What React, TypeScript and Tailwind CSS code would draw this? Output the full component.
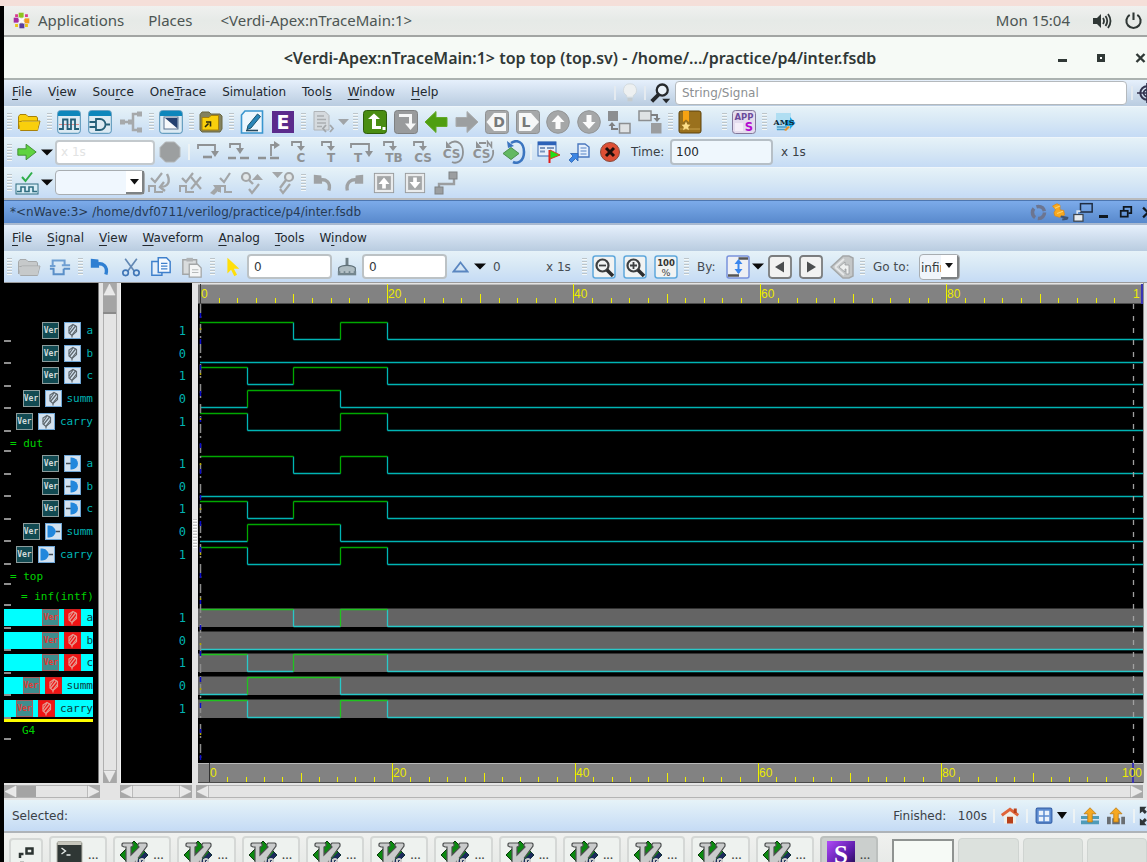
import React from "react";

type Kids = { children?: React.ReactNode };

const UI = "font-['DejaVu_Sans',sans-serif]";

/* ---------- small building blocks ---------- */

function Icon({ children, size = 24 }: Kids & { size?: number }) {
  return (
    <svg width={size} height={size} viewBox="0 0 24 24" fill="none" aria-hidden="true" className="shrink-0">
      {children}
    </svg>
  );
}

function Tool({ label, children, className = "w-[30px]" }: Kids & { label: string; className?: string }) {
  return (
    <button type="button" aria-label={label} className={`flex h-full shrink-0 items-center justify-center ${className}`}>
      {children}
    </button>
  );
}

function ToolRun({ items, className }: { items: [string, React.ReactNode][]; className: string }) {
  return (
    <div className={`flex h-full shrink-0 ${className}`}>
      {items.map(([label, icon]) => (
        <Tool key={label} label={label} className="flex-1">
          {icon}
        </Tool>
      ))}
    </div>
  );
}

function Grip() {
  return (
    <div className="flex w-[10px] shrink-0 flex-col items-center gap-px self-center">
      {[0, 1, 2, 3, 4, 5].map((i) => (
        <span key={i} className="h-[2px] w-[5px] border-b border-[#f4f8f8] bg-[#bcc5ca]" />
      ))}
    </div>
  );
}

function Bar({ children, className = "h-[30px]" }: Kids & { className?: string }) {
  return (
    <div
      className={`flex shrink-0 items-center overflow-hidden bg-linear-to-b from-[#e6f2f8] via-[#d6e7f5] to-[#c5dbf5] ${className}`}
    >
      {children}
    </div>
  );
}

function Caret() {
  return (
    <svg width="12" height="7" viewBox="0 0 12 7" aria-hidden="true">
      <path d="M0 0.5h12L6 6.5z" fill="#0a0a0a" />
    </svg>
  );
}

function Menu({ items }: { items: [string, string, string][] }) {
  return (
    <>
      {items.map(([a, key, b]) => (
        <button key={a + key + b} type="button" className="shrink-0 whitespace-nowrap">
          {a}
          <span className="underline decoration-1 underline-offset-[3px]">{key}</span>
          {b}
        </button>
      ))}
    </>
  );
}

/* ---------- toolbar glyphs ---------- */

const G = "#8f9294";

const Folder = ({ fill = "#f9cf0c", edge = "#a98208", top = "#ffe75a" }) => (
  <Icon>
    <path d="M1.5 19V6.5l1.5-2h6l2 2h8.500l1 1.500V11" fill={fill} stroke={edge} />
    <path d="M3.500 20.500h17l2.500-9.500H5.500L1.500 12z" fill={top} stroke={edge} />
    <path d="M2 12h20l-1.500 8H3z" fill={fill} />
  </Icon>
);

const Framed = ({ children }: Kids) => (
  <Icon>
    <rect x="0.700" y="0.700" width="22.600" height="22.600" rx="2.500" fill="#dceaf3" stroke="#4e8fb5" />
    <path d="M1 6V2.500L2.500 1h19L23 2.500V6z" fill="#0d86bb" />
    {children}
  </Icon>
);

const WaveIcon = () => (
  <Framed>
    <path d="M2 14.500h20" stroke="#e08a86" />
    <path d="M2 19h4V9.500h4.500V19H14V9.500h4V19h4" stroke="#255f78" strokeWidth="1.800" />
  </Framed>
);

const GateIcon = () => (
  <Framed>
    <path d="M8 9h4a5.500 5.500 0 0 1 0 11H8zM1.500 12H8M1.500 17H8M17.500 14.500H22" stroke="#255f78" strokeWidth="1.800" />
  </Framed>
);

const TreeIcon = () => (
  <Icon>
    <path d="M6 12h8M19 4h-5v16h5" stroke="#a6a9ab" strokeWidth="2.500" />
    <path d="M1 9.500h5v5H1zM9 9.500h4.500v5H9zM18 1.500h5v5h-5zM18 17.500h5v5h-5z" fill="#a6a9ab" />
  </Icon>
);

const SchematicIcon = () => (
  <Framed>
    <rect x="5" y="7" width="14" height="12" fill="#f7f9fb" stroke="#5a7390" />
    <path d="M6 8h12.500v10.500z" fill="#24406f" />
  </Framed>
);

const FolderLink = () => (
  <Icon>
    <path d="M1 20V4.500L3 2h7l2 2h9l2 2v13l-2 3H3z" fill="#83815d" stroke="#6a6740" />
    <path d="M3 7.500h7l2-2h7.500V20H3z" fill="#f9cf0c" stroke="#a98208" />
    <path d="M6 17l3.500-3.500M7 12h4.500v4.500" stroke="#2b2a10" strokeWidth="1.600" />
  </Icon>
);

const PencilIcon = () => (
  <Icon>
    <path d="M5 1h17.500v22H1.500V5z" fill="#eef7fd" stroke="#3a96cf" strokeWidth="1.600" />
    <path d="M8 15.500L17.500 4l3 2.500L11 18l-4 1.500z" fill="#2a86b8" stroke="#17546f" />
    <path d="M6 20.500h12" stroke="#27495c" strokeWidth="1.600" />
  </Icon>
);

const BigLetter = ({ bg, ch, fg = "#fff" }: { bg: string; ch: string; fg?: string }) => (
  <Icon>
    <rect x="1" y="1" width="22" height="22" fill={bg} />
    <text x="12" y="19" textAnchor="middle" fontSize="19" fontWeight="700" fontFamily="DejaVu Sans" fill={fg}>
      {ch}
    </text>
  </Icon>
);

const ScriptIcon = () => (
  <Icon>
    <path d="M3 1.500h11l4 4V20H3z" fill="#d5dade" stroke="#b0b4b7" />
    <path d="M6 6h7M6 9.500h9M6 13h9M6 16.500h5" stroke="#aaaeb1" strokeWidth="1.500" />
    <path d="M15 15l-3 3.500 3 3.500M19 15l3 3.500-3 3.500" stroke="#a3a7aa" strokeWidth="1.800" />
  </Icon>
);

const Tile = ({ bg, edge, children }: Kids & { bg: string; edge: string }) => (
  <Icon>
    <rect x="0.500" y="0.500" width="23" height="23" rx="3" fill={bg} stroke={edge} />
    {children}
  </Icon>
);

const GreenL = () => (
  <Tile bg="#4a8d12" edge="#2e5d0b">
    <path d="M9 19V9H5l6-5.500L17 9h-4v7h5v3z" fill="#fff" />
    <path d="M19.500 17h3v3h-3z" fill="#fff" />
  </Tile>
);

const GreyTurn = () => (
  <Tile bg="#999b9c" edge="#7e8081">
    <path d="M5 5.500h11.500v9" stroke="#f6f7f7" strokeWidth="3" />
    <path d="M11 13.500h11L16.500 20z" fill="#f6f7f7" />
  </Tile>
);

const BigArrow = ({ left = false, fill, edge }: { left?: boolean; fill: string; edge: string }) => (
  <Icon>
    <path
      d={left ? "M12 1.500v6h11v9H12v6L1 12z" : "M12 1.500v6H1v9h11v6L23 12z"}
      fill={fill}
      stroke={edge}
      strokeLinejoin="round"
    />
  </Icon>
);

const TagTile = ({ ch, flip = false }: { ch: string; flip?: boolean }) => (
  <Tile bg="#a6a8a9" edge="#8f9192">
    <path d={flip ? "M3 3h12l8 9-8 9H3z" : "M21 3H9L1.500 12 9 21h12z"} fill="#f6f7f7" />
    <text x={flip ? 10 : 14} y="17" textAnchor="middle" fontSize="14" fontWeight="700" fontFamily="DejaVu Sans" fill="#77797a">
      {ch}
    </text>
  </Tile>
);

const RoundArrow = ({ down = false }: { down?: boolean }) => (
  <Icon>
    <circle cx="12" cy="12" r="11.300" fill="#a5a7a8" stroke="#929495" />
    <path d={down ? "M9.500 5h5v7h4L12 19l-6.500-7h4z" : "M9.500 19h5v-7h4L12 5l-6.500 7h4z"} fill="#fbfbfb" />
  </Icon>
);

const HierUp = () => (
  <Icon>
    <rect x="1" y="1" width="10" height="10" fill="#8c8e90" />
    <path d="M5 13v6h6" stroke="#7e8082" strokeWidth="2" />
    <path d="M1.500 16L5 12l3.500 4z" fill="#7e8082" />
    <rect x="12.500" y="13.500" width="10.500" height="9.500" fill="#dfe2e4" stroke="#8c8e90" strokeWidth="1.500" />
  </Icon>
);

const HierDown = () => (
  <Icon>
    <rect x="1" y="1" width="12" height="9.500" fill="#dfe2e4" stroke="#8c8e90" strokeWidth="1.500" />
    <path d="M13 5h6v5" stroke="#7e8082" strokeWidth="2" />
    <path d="M15.500 8h7L19 12z" fill="#7e8082" />
    <rect x="13" y="13" width="10.500" height="10.500" fill="#9b9d9f" />
  </Icon>
);

const BookIcon = () => (
  <Icon>
    <rect x="1" y="1" width="22" height="22" rx="2" fill="#9a711d" stroke="#5d430d" />
    <path d="M2 19h20" stroke="#c7a14a" />
    <path d="M5 1h6v11l-3-2.500L5 12z" fill="#f7a312" />
    <path d="M8 11.500l1.400 3 3.100.300-2.300 2.200.700 3.200L8 18.500l-2.900 1.700.700-3.200-2.300-2.200 3.100-.300z" fill="#ffe08a" />
  </Icon>
);

const AppsIcon = () => (
  <Tile bg="#e4dcee" edge="#82789a">
    <rect x="3" y="13" width="8" height="8" fill="#f4eef8" />
    <text x="12" y="9.500" textAnchor="middle" fontSize="8.500" fontWeight="700" fontFamily="DejaVu Sans" fill="#6a4a9c">
      APP
    </text>
    <text x="17" y="20.500" textAnchor="middle" fontSize="11.500" fontWeight="700" fontFamily="DejaVu Sans" fill="#b40cd0">
      S
    </text>
  </Tile>
);

const AmsIcon = () => (
  <Icon>
    <rect x="4" y="3" width="15" height="17" fill="#b0def2" />
    <path d="M5 17h10M5 19.500h8" stroke="#4a9dcb" strokeWidth="1.500" />
    <path d="M13 10h5V7l5.500 6-5.500 6v-3h-5z" fill="#22a7e4" />
    <path d="M12 20l4-4 2 1-4 4z" fill="#e8922a" />
    <text x="12" y="15" textAnchor="middle" fontSize="8" fontWeight="700" fontFamily="DejaVu Serif" fill="#0d2533">
      AMS
    </text>
  </Icon>
);

const GreenGo = () => (
  <Icon size={22}>
    <path d="M2 8.500h9V3.500L22 12l-11 8.500v-5H2z" fill="#5fd340" stroke="#3c8a30" strokeLinejoin="round" />
  </Icon>
);

const Octagon = () => (
  <Icon>
    <path d="M7.500 2h9L22 7.500v9L16.500 22h-9L2 16.500v-9z" fill="#9c9fa0" stroke="#b4b7b8" />
  </Icon>
);

const StepIcon = ({ d, head, text, tx = 15, dash }: { d: string; head: string; text?: string; tx?: number; dash?: string }) => (
  <Icon>
    <path d={d} stroke={G} strokeWidth="1.800" />
    <path d={head} fill={G} />
    {dash && <path d={dash} stroke={G} strokeWidth="2.600" />}
    {text && (
      <text x={tx} y="21.500" textAnchor="middle" fontSize="12" fontWeight="700" fontFamily="DejaVu Sans" fill={G}>
        {text}
      </text>
    )}
  </Icon>
);

const HOOK = "M4 6V2h9v4";
const HOOK_HEAD = "M9 6h8l-4 5z";

const LoopCS = ({ n = false }: { n?: boolean }) => (
  <Icon>
    <path d={n ? "M8 3h7M22 10c1 7-3 13-10 12" : "M8 4c6-5 14-2 14 8s-7 12-11 10"} stroke={G} strokeWidth="1.800" />
    <path d="M5 1v7h6z" fill={G} />
    <text x="10.500" y="18" textAnchor="middle" fontSize="12" fontWeight="700" fontFamily="DejaVu Sans" fill={G}>
      CS
    </text>
    {n && <path d="M16.500 7V1.500L20.500 7V1.500" stroke={G} strokeWidth="1.500" />}
  </Icon>
);

const LoopGreen = () => (
  <Icon>
    <path d="M9 3c6-4 13-1 13 9s-7 12-11 10" stroke="#3b75c0" strokeWidth="2.600" />
    <path d="M5 1l1 7 6-2z" fill="#3b75c0" />
    <path d="M9 7.500l8 6-8 6-8-6z" fill="#62b862" stroke="#4b8f4d" />
  </Icon>
);

const FlagTable = () => (
  <Icon>
    <rect x="2" y="2" width="18" height="14" fill="#e6eefa" stroke="#3566b0" />
    <path d="M2 3.500h18" stroke="#2d62b8" strokeWidth="3.500" />
    <path d="M4 8h5M11 8h7M4 11.500h5" stroke="#7a95bd" strokeWidth="1.800" />
    <path d="M13.500 10v13" stroke="#e11a1a" strokeWidth="2" />
    <path d="M14 10l10 5-10 4z" fill="#1fe016" stroke="#d8401c" />
  </Icon>
);

const DocJump = () => (
  <Icon>
    <path d="M11 4h7l4 3v10H11z" fill="#e4effc" stroke="#4a78be" strokeWidth="1.400" />
    <path d="M13.500 8h6M13.500 11h6M13.500 14h6" stroke="#5583c6" strokeWidth="1.200" />
    <path d="M2 20l4-4-2.500-2.500H11V21l-2.500-2.500-4 4z" fill="#3d86e4" stroke="#2b62b0" strokeWidth="0.800" />
  </Icon>
);

const RedX = () => (
  <Icon>
    <circle cx="12" cy="12" r="9.500" fill="#dd4f35" stroke="#8a4a3c" />
    <path d="M8 8l8 8M16 8l-8 8" stroke="#1d0f0c" strokeWidth="3" />
  </Icon>
);

const CheckWave = ({ color = "#2f6d80", check = "#2fae4a", kind = "" }: { color?: string; check?: string; kind?: string }) => (
  <Icon>
    {kind === "" && (
      <>
        <rect x="1" y="13" width="22" height="10" fill="#d7edf5" stroke={color} />
        <path d="M2 20.500h4V16h4v4.500h4V16h4v4.500h4" stroke={color} strokeWidth="1.600" />
        <path d="M7 6l3.500 4L17 1.500" stroke={check} strokeWidth="2" />
      </>
    )}
    {kind !== "" && (
      <>
        <path d={kind === "jump" ? "M10 21v-6h6v6h7" : "M1 21v-6h6v6h8"} stroke={color} strokeWidth="2" />
        <path d={kind === "jump" ? "M11 7l4 4 6-9" : "M3 7l4 4 7-9"} stroke={color} strokeWidth="2.200" />
      </>
    )}
    {kind === "turn" && <path d="M19 3c4 8 1 13-7 13M16 11l-4 5 5 4" stroke={color} strokeWidth="2.400" />}
    {kind === "x" && <path d="M12 6l10 12M22 6L12 18" stroke={color} strokeWidth="2.200" />}
    {kind === "jump" && <path d="M1 22l5-5-2-3h8v8l-3-2-4 4z" fill={color} />}
  </Icon>
);

const FindCheck = ({ flip = false }: { flip?: boolean }) => (
  <Icon>
    <circle cx={flip ? 18 : 6} cy="6" r="4" stroke="#a3a6a8" strokeWidth="2.200" fill="#e3e8ea" />
    <path d={flip ? "M15 9l-6 8" : "M9 9l4 4"} stroke="#a3a6a8" strokeWidth="2.400" />
    <path d={flip ? "M1 1h11L6.500 7z" : "M12 9h11l-5.500-6z"} fill="#a3a6a8" />
    <path d="M9 18l3 4 7-9" stroke="#a3a6a8" strokeWidth="2.200" />
  </Icon>
);

const Curl = ({ redo = false, color = "#9fa2a4" }: { redo?: boolean; color?: string }) => (
  <Icon size={20}>
    <path d={redo ? "M4 21C2 11 9 6 18 9" : "M19 21C22 11 15 6 7 9"} stroke={color} strokeWidth="4" />
    <path d={redo ? "M14 3l9-1v11H13z" : "M10 3L1 2v11h10z"} fill={color} />
  </Icon>
);

const SquareArrow = ({ down = false }: { down?: boolean }) => (
  <Icon size={22}>
    <rect x="1.500" y="1.500" width="21" height="21" fill="#e9ebec" stroke="#979a9b" />
    <rect x="4.500" y="4.500" width="15" height="15" fill="#a4a7a8" />
    <path d={down ? "M10 6h4v5h4l-6 7-6-7h4z" : "M10 18h4v-5h4l-6-7-6 7h4z"} fill="#fff" />
  </Icon>
);

const NodeLink = () => (
  <Icon>
    <path d="M5 17v-4h15V7" stroke="#9b9ea0" strokeWidth="2.400" />
    <rect x="15" y="1" width="8" height="7" fill="#9b9ea0" stroke="#7f8284" />
    <rect x="1" y="16" width="8" height="7" fill="#9b9ea0" stroke="#7f8284" />
  </Icon>
);

const CrossProbe = () => (
  <Icon size={22}>
    <path d="M4 11V5h13v5M1 11h6M14 10h9" stroke="#6f9fd2" strokeWidth="2.200" />
    <path d="M5 14v6h11v-6M1 14h5M16 14h7" stroke="#5a8fc8" strokeWidth="2.200" />
  </Icon>
);

const Scissors = () => (
  <Icon size={20}>
    <path d="M5 2l11 15M19 2L8 17" stroke="#6288b4" strokeWidth="2" />
    <circle cx="5.500" cy="19" r="3.300" stroke="#3f75b6" strokeWidth="2" />
    <circle cx="18.500" cy="19" r="3.300" stroke="#3f75b6" strokeWidth="2" />
  </Icon>
);

const Pages = () => (
  <Icon size={22}>
    <path d="M2 6h11v15H2z" fill="#e3eefa" stroke="#3f80cc" strokeWidth="1.600" />
    <path d="M9 2h9l4 4v12H9z" fill="#f4f9ff" stroke="#3f80cc" strokeWidth="1.600" />
    <path d="M12 8h7M12 11h7M12 14h7" stroke="#3f80cc" strokeWidth="1.200" />
  </Icon>
);

const PasteIcon = () => (
  <Icon size={22}>
    <path d="M2 4h15v16H2z" fill="#d9dcdd" stroke="#a3a6a7" strokeWidth="1.600" />
    <path d="M6 2h7v4H6z" fill="#b0b3b4" />
    <path d="M9 9h9l4 4v10H9z" fill="#f5f6f6" stroke="#a3a6a7" strokeWidth="1.400" />
    <path d="M12 15h7M12 18h7" stroke="#b0b3b4" />
  </Icon>
);

const CursorIcon = () => (
  <Icon size={22}>
    <path d="M7 2v17l4-4 3.500 7 3-1.500-3.500-6.500H20z" fill="#ffdf0a" />
  </Icon>
);

const StampIcon = () => (
  <Icon size={20}>
    <path d="M12 1v10" stroke="#6f7f86" strokeWidth="3.500" />
    <path d="M2 13c4-4 16-4 20 0v6H2z" fill="#aebcc2" stroke="#5f7078" strokeWidth="1.400" />
    <path d="M1 17h22v5H1z" fill="#74868e" />
    <path d="M4 17h4v2H4zM10 17h4v2h-4zM16 17h4v2h-4z" fill="#c6d1d6" />
  </Icon>
);

const ZoomTile = ({ plus = false }: { plus?: boolean }) => (
  <Icon>
    <rect x="1" y="1" width="22" height="22" rx="2.500" fill="#f1f3f3" stroke="#5fa8dc" strokeWidth="1.500" />
    <circle cx="10.500" cy="10.500" r="6" stroke="#3d3f40" strokeWidth="2.200" />
    <path d="M15 15l6 6" stroke="#2c2d2e" strokeWidth="3.500" />
    <path d={plus ? "M7 10.500h7M10.500 7v7" : "M7 10.500h7"} stroke="#3d3f40" strokeWidth="1.800" />
  </Icon>
);

const Zoom100 = () => (
  <Icon>
    <rect x="1" y="1" width="22" height="22" rx="2.500" fill="#f1f3f3" stroke="#5fa8dc" strokeWidth="1.500" />
    <text x="12" y="11" textAnchor="middle" fontSize="8.500" fontWeight="700" fontFamily="DejaVu Sans" fill="#333">
      100
    </text>
    <text x="12" y="21" textAnchor="middle" fontSize="9.500" fontFamily="DejaVu Sans" fill="#444">
      %
    </text>
  </Icon>
);

const EdgeTile = () => (
  <Icon>
    <rect x="1" y="1" width="22" height="22" rx="2" fill="#eef0f4" stroke="#7a92dc" strokeWidth="1.500" />
    <path d="M12.500 3.500H22M2 20.500h11" stroke="#555" strokeWidth="2.500" />
    <path d="M12.500 6v12" stroke="#3a86ee" strokeWidth="2" />
    <path d="M8.500 9l4-5 4 5zM8.500 14l4 5 4-5z" fill="#3a86ee" />
  </Icon>
);

const StepTile = ({ next = false }: { next?: boolean }) => (
  <Icon>
    <rect x="1" y="1" width="22" height="22" rx="3" fill="#f2f2f1" stroke="#7b7d7e" strokeWidth="1.800" />
    <path d={next ? "M8 6.500v11l9-5.500z" : "M16 6.500v11L7 12z"} fill="#4c4e4f" />
  </Icon>
);

const BackDiamond = () => (
  <Icon>
    <path d="M1 12L13 1h6l4 2v18l-4 2h-6z" fill="#c4c7c8" stroke="#a4a7a8" strokeWidth="1.500" />
    <path d="M5 12l9-8M5 12l9 8" stroke="#e6e8e9" strokeWidth="1.800" />
    <path d="M9 12l6-5v3h4v9h-3v-5h-1v3z" fill="#eef0f0" stroke="#9a9d9e" strokeWidth="0.800" />
  </Icon>
);

/* ---------- desktop chrome ---------- */

function DesktopBar() {
  return (
    <header className="flex h-[31px] shrink-0 items-center border-b-2 border-[#a2a5a3] bg-linear-to-b from-[#f0f1ef] via-[#e6eae7] to-[#e9ebe8] pr-1 pl-[9px] font-['Noto_Sans',sans-serif] text-[15px] whitespace-nowrap text-[#4c5553]">
      <Icon size={17}>
        <path d="M8 1h7v7H8z" fill="#8fc31f" />
        <path d="M16 9h7v7h-7z" fill="#f39a1e" />
        <path d="M9 16h7v7H9z" fill="#5a3fa0" />
        <path d="M1 8h7v7H1z" fill="#a52ba0" />
        <path d="M3 3l4 0 0 4-4 0zM17 3h4v4h-4z" fill="#d93a8f" />
        <path d="M17 17h4v4h-4zM3 17h4v4H3z" fill="#ecc316" />
        <path d="M8 8l8 8M16 8l-8 8" stroke="#fff" strokeWidth="2" />
      </Icon>
      <button type="button" className="ml-2">Applications</button>
      <button type="button" className="ml-6">Places</button>
      <button type="button" className="ml-7">{"<Verdi-Apex:nTraceMain:1>"}</button>
      <span className="ml-auto">Mon 15:04</span>
      <button type="button" aria-label="Volume" className="ml-[22px]">
        <svg width="20" height="18" viewBox="0 0 20 18" fill="none" aria-hidden="true">
          <path d="M1 6h4l4-4v14l-4-4H1z" fill="#2f3735" />
          <path d="M11 6q2 3 0 6M13.500 4q3.500 5 0 10M16 2q5 7 0 14" stroke="#2f3735" strokeWidth="1.800" />
        </svg>
      </button>
      <button type="button" aria-label="Power" className="ml-3">
        <svg width="19" height="19" viewBox="0 0 20 20" fill="none" aria-hidden="true">
          <path d="M6 4a7.500 7.500 0 1 0 8 0M10 1.500v8" stroke="#2f3735" strokeWidth="2.200" />
        </svg>
      </button>
    </header>
  );
}

function WindowTitle() {
  return (
    <div className="flex h-[43px] shrink-0 items-center border-b-2 border-[#abb2b0] bg-[#f6faf6] text-[#303836]">
      <h1 className="min-w-0 flex-1 pl-[98px] text-center font-['Noto_Sans',sans-serif] text-[16px] font-semibold whitespace-nowrap">
        {"<Verdi-Apex:nTraceMain:1> top top (top.sv) - /home/.../practice/p4/inter.fsdb"}
      </h1>
      <div className="flex w-[89px] shrink-0 items-center justify-between">
        <button type="button" aria-label="Minimize" className="mt-[6px] h-[3px] w-[9px] bg-[#303836]" />
        <button type="button" aria-label="Maximize" className="h-[8px] w-[8px] border-[3px] border-[#303836] bg-white" />
        <button type="button" aria-label="Close">
          <svg width="12" height="10" viewBox="0 0 12 10" aria-hidden="true">
            <path d="M1.500 1l8 8M9.500 1l-8 8" stroke="#303836" strokeWidth="2.400" />
          </svg>
        </button>
      </div>
    </div>
  );
}

function MainMenu() {
  return (
    <nav className="flex h-[26px] shrink-0 items-center overflow-hidden bg-linear-to-b from-[#e6f0fc] to-[#b9cce0] pl-[8px] text-[12px] text-[#22282e]">
      <div className="flex h-full min-w-0 flex-1 items-center gap-4 pb-[3px]">
        <Menu
          items={[
            ["", "F", "ile"],
            ["V", "i", "ew"],
            ["Sou", "r", "ce"],
            ["One", "T", "race"],
            ["Simu", "l", "ation"],
            ["Tool", "s", ""],
            ["", "W", "indow"],
            ["", "H", "elp"],
          ]}
        />
      </div>
      <span className="h-[14px] w-[2px] bg-[#e4eaf0]" />
      <button type="button" aria-label="Hint" className="mx-1">
        <Icon size={20}>
          <path d="M12 1a7.500 7.500 0 0 1 4 14v2H8v-2a7.500 7.500 0 0 1 4-14z" fill="#edf0f1" stroke="#cfd6da" />
          <path d="M9 18h6v4H9z" fill="#c5ccd0" />
        </Icon>
      </button>
      <span className="h-[14px] w-[2px] bg-[#e4eaf0]" />
      <button type="button" aria-label="Search" className="mx-1">
        <Icon size={21}>
          <circle cx="14" cy="8" r="6.300" fill="#e9f1f8" stroke="#26292c" strokeWidth="2.600" />
          <path d="M10 13l-8 8" stroke="#26292c" strokeWidth="4.500" />
          <path d="M14 18h9l-4.500 5z" fill="#26292c" />
        </Icon>
      </button>
      <input
        type="text"
        aria-label="Search string or signal"
        placeholder="String/Signal"
        className="h-[24px] w-[452px] rounded-sm border border-[#b4b9bd] bg-white px-[6px] text-[12px] placeholder:text-[#8c8f92]"
      />
      <span className="ml-1 h-[14px] w-[2px] bg-[#e4eaf0]" />
      <button type="button" aria-label="Locate" className="ml-1 w-[10px] overflow-hidden">
        <Icon size={20}>
          <circle cx="12" cy="12" r="8" stroke="#33334f" strokeWidth="2.400" />
          <circle cx="12" cy="12" r="4" stroke="#33334f" strokeWidth="2" />
          <path d="M12 0v24M0 12h24" stroke="#33334f" strokeWidth="2" />
        </Icon>
      </button>
    </nav>
  );
}

function ToolbarOne() {
  return (
    <Bar className="h-[31px] border-t border-[#eff6fb] pb-px">
      <Grip />
      <Tool label="Open"><Folder /></Tool>
      <Grip />
      <ToolRun
        className="w-[92px]"
        items={[["New waveform", <WaveIcon />], ["New schematic", <GateIcon />], ["Hierarchy", <TreeIcon />]]}
      />
      <Grip />
      <Tool label="Temporal flow"><SchematicIcon /></Tool>
      <Grip />
      <Tool label="Import"><FolderLink /></Tool>
      <Grip />
      <ToolRun className="w-[62px]" items={[["Edit source", <PencilIcon />], ["Editor", <BigLetter bg="#5b2b8c" ch="E" />]]} />
      <Grip />
      <Tool label="Script"><ScriptIcon /></Tool>
      <svg width="11" height="6" viewBox="0 0 11 6" className="mr-px shrink-0" aria-hidden="true">
        <path d="M0 0h11L5.500 6z" fill="#a0a4a7" />
      </svg>
      <Grip />
      <ToolRun
        className="w-[305px]"
        items={[
          ["Load", <GreenL />],
          ["Turn", <GreyTurn />],
          ["Back", <BigArrow left fill="#4f9e10" edge="#63a928" />],
          ["Forward", <BigArrow fill="#9c9fa0" edge="#a9acad" />],
          ["Driver", <TagTile ch="D" />],
          ["Load trace", <TagTile ch="L" flip />],
          ["Up", <RoundArrow />],
          ["Down", <RoundArrow down />],
          ["Scope up", <HierUp />],
          ["Scope down", <HierDown />],
        ]}
      />
      <Grip />
      <Tool label="Bookmark"><BookIcon /></Tool>
      <span className="w-[14px] shrink-0" />
      <Grip />
      <Tool label="Apps"><AppsIcon /></Tool>
      <Grip />
      <Tool label="AMS"><AmsIcon /></Tool>
    </Bar>
  );
}

function ToolbarTwo() {
  return (
    <Bar className="h-[30px] border-t border-[#eff6fb] pb-px">
      <Grip />
      <Tool label="Run" className="w-[26px]"><GreenGo /></Tool>
      <Tool label="Run options" className="w-[14px]"><Caret /></Tool>
      <input
        type="text"
        aria-label="Step size"
        placeholder="x 1s"
        className="ml-[1px] h-[25px] w-[100px] shrink-0 rounded-sm border-2 border-[#c3c9cd] bg-white px-1 text-[12px] placeholder:text-[#e2e3e3]"
      />
      <Tool label="Stop"><Octagon /></Tool>
      <span className="mx-[3px] h-[16px] w-[2px] shrink-0 bg-[#edf3f5]" />
      <ToolRun
        className="w-[336px]"
        items={[
          ["Next", <StepIcon d="M2 9V5h17v8" head="M15 11h8l-4 6z" dash="M7 17h9" />],
          ["Step", <StepIcon d="M3 8V4h10v5" head="M9 8h8l-4 6z" dash="M1 18h8M13 18h9" />],
          ["Step out", <StepIcon d="M14 16V5h4" head="M17 1v8l6-4z" dash="M1 18h8M13 18h9" />],
          ["Step class", <StepIcon d={HOOK} head={HOOK_HEAD} text="C" tx={13} />],
          ["Step thread", <StepIcon d={HOOK} head={HOOK_HEAD} text="T" tx={13} />],
          ["Next thread", <StepIcon d="M2 8V4h18v8" head="M16 11h8l-4 6z" text="T" tx={9} />],
          ["Step testbench", <StepIcon d={HOOK} head={HOOK_HEAD} text="TB" tx={14} />],
          ["Step constraint", <StepIcon d={HOOK} head={HOOK_HEAD} text="CS" tx={13} />],
          ["Constraint loop", <LoopCS />],
          ["Next constraint", <LoopCS n />],
          ["Rerun", <LoopGreen />],
        ]}
      />
      <span className="mx-px h-[16px] w-[2px] shrink-0 bg-[#edf3f5]" />
      <ToolRun
        className="w-[92px]"
        items={[["Breakpoints", <FlagTable />], ["Go to file", <DocJump />], ["Kill", <RedX />]]}
      />
      <label htmlFor="sim-time" className="ml-[6px] w-[39px] shrink-0 text-[12px] text-[#3a4046]">
        Time:
      </label>
      <input
        id="sim-time"
        type="text"
        defaultValue="100"
        className="h-[26px] w-[103px] shrink-0 rounded-sm border-2 border-[#b6bfc6] bg-[#eff7fd] px-1 text-[12px] text-[#24292d]"
      />
      <span className="ml-2 shrink-0 text-[12px] text-[#3a4046]">x 1s</span>
    </Bar>
  );
}

function ToolbarThree() {
  return (
    <Bar className="h-[31px] border-t border-[#eff6fb] pb-px">
      <Grip />
      <Tool label="Add signals" className="w-[26px]"><CheckWave /></Tool>
      <Tool label="Signal options" className="w-[14px]"><Caret /></Tool>
      <div className="ml-[1px] flex h-[25px] w-[90px] shrink-0 rounded-sm border border-[#a8adb1] bg-[#f0f7fe]">
        <input type="text" aria-label="Signal set" className="min-w-0 flex-1 bg-transparent px-1 text-[12px]" />
        <button
          type="button"
          aria-label="Open signal sets"
          className="flex w-[18px] items-center justify-center border-r-2 border-b-2 border-[#7e8284] bg-white"
        >
          <svg width="9" height="6" viewBox="0 0 9 6" aria-hidden="true"><path d="M0 0h9L4.500 5.500z" fill="#111" /></svg>
        </button>
      </div>
      <ToolRun
        className="w-[153px]"
        items={[
          ["Apply", <CheckWave kind="turn" color="#a3a6a8" />],
          ["Remove", <CheckWave kind="x" color="#a3a6a8" />],
          ["Jump", <CheckWave kind="jump" color="#a3a6a8" />],
          ["Find up", <FindCheck />],
          ["Find down", <FindCheck flip />],
        ]}
      />
      <Grip />
      <ToolRun
        className="w-[153px]"
        items={[
          ["Undo", <Curl />],
          ["Redo", <Curl redo />],
          ["Previous", <SquareArrow />],
          ["Next", <SquareArrow down />],
          ["Connect", <NodeLink />],
        ]}
      />
    </Bar>
  );
}

function WaveTitle() {
  return (
    <div className="flex h-[27px] shrink-0 flex-col border-t-2 border-b-2 border-t-[#b9bbbd] border-b-[#a9b9cf]">
      <div className="flex flex-1 items-center overflow-hidden border-t border-[#4d76b0] bg-linear-to-b from-[#7cabea] to-[#5889cc] pl-[6px] text-[12px] text-[#273a52]">
        <h2 className="flex-1 whitespace-nowrap">{"*<nWave:3> /home/dvf0711/verilog/practice/p4/inter.fsdb"}</h2>
        <button type="button" aria-label="Refresh" className="mr-1">
          <Icon size={17}>
            <circle cx="12" cy="12" r="8.500" stroke="#6c7590" strokeWidth="5" strokeDasharray="14 4" />
          </Icon>
        </button>
        <button type="button" aria-label="Pin">
          <Icon size={18}>
            <path d="M2 4l6-3 4 2v6l5 1 1 6-7 3-6-2-1-4 2-4z" fill="#f9a91e" stroke="#e08a10" />
            <path d="M5 7l7-3M8 14l8-3" stroke="#ffd26a" strokeWidth="1.500" />
            <path d="M13 18l10 2M15 22l7-1" stroke="#3f5575" strokeWidth="2.400" />
          </Icon>
        </button>
        <button type="button" aria-label="Undock" className="ml-1">
          <Icon size={20}>
            <rect x="9" y="2" width="14" height="10" stroke="#1f2d42" strokeWidth="1.800" />
            <path d="M9 11H5v4" stroke="#d9e4f2" strokeWidth="2" />
            <rect x="1" y="15" width="11" height="8" fill="#e6ebf0" stroke="#3b434d" strokeWidth="1.500" />
          </Icon>
        </button>
        <button type="button" aria-label="Minimize window" className="mt-[8px] ml-[6px] h-[3px] w-[9px] bg-[#101820]" />
        <button type="button" aria-label="Restore window" className="ml-[11px]">
          <Icon size={14}>
            <path d="M8 9V3h13v11h-5" stroke="#101820" strokeWidth="3" />
            <rect x="3" y="10" width="12" height="10" stroke="#101820" strokeWidth="3" />
          </Icon>
        </button>
        <button type="button" aria-label="Close window" className="ml-[9px] w-[5px] overflow-hidden">
          <Icon size={13}>
            <path d="M2 3l18 18M20 3L2 21" stroke="#101820" strokeWidth="4" />
          </Icon>
        </button>
      </div>
    </div>
  );
}

function WaveToolbar() {
  return (
    <Bar className="h-[31px]">
      <Grip />
      <ToolRun
        className="w-[61px]"
        items={[
          ["Open file", <Folder fill="#c6c9ca" edge="#a6a9aa" top="#d9dbdc" />],
          ["Get signals", <CrossProbe />],
        ]}
      />
      <Grip />
      <ToolRun
        className="w-[122px]"
        items={[
          ["Undo edit", <Curl color="#2f7fd2" />],
          ["Cut", <Scissors />],
          ["Copy", <Pages />],
          ["Paste", <PasteIcon />],
        ]}
      />
      <Grip />
      <Tool label="Cursor"><CursorIcon /></Tool>
      <input
        type="text"
        aria-label="Cursor time"
        defaultValue="0"
        className="h-[25px] w-[85px] shrink-0 rounded-sm border-2 border-[#bcc2c5] bg-white px-[5px] text-[12px] text-[#33383c]"
      />
      <Tool label="Marker"><StampIcon /></Tool>
      <input
        type="text"
        aria-label="Marker time"
        defaultValue="0"
        className="h-[25px] w-[85px] shrink-0 rounded-sm border-2 border-[#bcc2c5] bg-white px-[5px] text-[12px] text-[#33383c]"
      />
      <Tool label="Delta" className="w-[26px]">
        <svg width="17" height="12" viewBox="0 0 17 12" fill="none" aria-hidden="true">
          <path d="M8.500 1.500L15.500 10.500h-14z" stroke="#5a86c0" strokeWidth="1.800" />
        </svg>
      </Tool>
      <Tool label="Delta options" className="w-[14px]"><Caret /></Tool>
      <output className="ml-[6px] w-[53px] shrink-0 text-[12px] text-[#464c52]">0</output>
      <span className="w-[33px] shrink-0 text-[12px] whitespace-nowrap text-[#464c52]">x 1s</span>
      <Grip />
      <ToolRun
        className="w-[92px]"
        items={[["Zoom out", <ZoomTile />], ["Zoom in", <ZoomTile plus />], ["Zoom all", <Zoom100 />]]}
      />
      <Grip />
      <span className="ml-[6px] w-[28px] shrink-0 text-[12px] text-[#464c52]">By:</span>
      <Tool label="Any edge" className="w-[26px]"><EdgeTile /></Tool>
      <Tool label="Edge options" className="w-[14px]"><Caret /></Tool>
      <ToolRun
        className="w-[92px]"
        items={[["Previous edge", <StepTile />], ["Next edge", <StepTile next />], ["Step back", <BackDiamond />]]}
      />
      <Grip />
      <label htmlFor="goto" className="ml-[6px] w-[46px] shrink-0 text-[12px] whitespace-nowrap text-[#464c52]">
        Go to:
      </label>
      <div className="relative h-[26px] w-[41px] shrink-0 overflow-hidden rounded-sm border border-[#a8adb1] bg-[#f0f5fb]">
        <select id="goto" className="h-full w-full appearance-none overflow-hidden bg-transparent pl-px text-[12px] text-[#33383c]">
          <option>infinite</option>
        </select>
        <span className="pointer-events-none absolute inset-y-0 right-0 flex w-[18px] items-center justify-center border-r-2 border-b-2 border-[#7e8284] bg-white">
          <svg width="8" height="5" viewBox="0 0 8 5" aria-hidden="true"><path d="M0 0h8L4 5z" fill="#111" /></svg>
        </span>
      </div>
    </Bar>
  );
}

/* ---------- wave viewer ---------- */

type Kind = "mic" | "in" | "out";
type Signal = { name: string; value: string; edges: number[]; start: 0 | 1; kind: Kind };

const base: Omit<Signal, "kind">[] = [
  { name: "a", value: "1", start: 1, edges: [10, 15, 20] },
  { name: "b", value: "0", start: 0, edges: [] },
  { name: "c", value: "1", start: 1, edges: [5, 10, 20] },
  { name: "summ", value: "0", start: 0, edges: [5, 15] },
  { name: "carry", value: "1", start: 1, edges: [5, 15, 20] },
];

const withKinds = (kinds: Kind[]): Signal[] => base.map((s, i) => ({ ...s, kind: kinds[i] }));

const tb = withKinds(["mic", "mic", "mic", "mic", "mic"]);
const dut = withKinds(["in", "in", "in", "out", "out"]);

function KindIcon({ kind, selected }: { kind: Kind; selected: boolean }) {
  const bg = selected ? "#f01414" : "#d3e2f0";
  return (
    <svg width="17" height="17" viewBox="0 0 17 17" fill="none" className="shrink-0" aria-hidden="true">
      <rect x="0.500" y="0.500" width="16" height="16" fill={bg} stroke={selected ? "#d02020" : "#6fa6d6"} />
      {kind === "mic" && (
        <g stroke={selected ? "#e59a90" : "#5f686e"} strokeWidth="1.200">
          <path d="M5 5l4-2.500 3.500 2v5L8 13.500 5 11z" />
          <path d="M5 9l4-6M5.500 11.500l6.500-8M8 13l4.500-6M8 13.500v2" />
        </g>
      )}
      {kind === "in" && (
        <>
          <path d="M2 8.500h5" stroke="#404a52" strokeWidth="1.500" />
          <path d="M6.500 2.500h1a6.500 6 0 0 1 0 12h-1z" fill="#2287dc" />
        </>
      )}
      {kind === "out" && (
        <>
          <path d="M2.500 2.500h1.500c4 0 6 3 7 6-1 3-3 6-7 6H2.500z" fill="#2287dc" />
          <path d="M11 8.500h4" stroke="#404a52" strokeWidth="1.500" />
        </>
      )}
    </svg>
  );
}

const Tick = () => <span className="absolute bottom-0 left-0 h-[2px] w-[7px] bg-[#8e8e8e]" />;

function NameGroup({ signals, selected = false }: { signals: Signal[]; selected?: boolean }) {
  return (
    <ul className="flex h-[113px] flex-col">
      {signals.map((s) => (
        <li key={s.name} className="relative flex flex-1 items-center pt-px">
          <div
            className={
              selected
                ? "mr-[5px] flex h-[17px] flex-1 items-center justify-end gap-[5px] bg-[#00ffff] text-[#0c3c40]"
                : "mr-[5px] flex h-[17px] flex-1 items-center justify-end gap-[5px] text-[#00b4b4]"
            }
          >
            <span
              className={
                selected
                  ? "flex h-[17px] w-[17px] items-center justify-center border border-[#a06060] bg-[#3f8d8d] text-[8px] font-bold text-[#e23a34]"
                  : "flex h-[17px] w-[17px] items-center justify-center border border-[#8d9c9c] bg-[#124a52] text-[8px] font-bold text-[#d3dada]"
              }
            >
              Ver
            </span>
            <KindIcon kind={s.kind} selected={selected} />
            <span>{s.name}</span>
          </div>
          <Tick />
        </li>
      ))}
    </ul>
  );
}

function NamePane() {
  return (
    <div className="w-[95px] shrink-0 overflow-hidden border-r border-[#777] bg-black pt-[36px] font-['DejaVu_Sans_Mono',monospace] text-[11px] leading-[17px] whitespace-nowrap text-[#00d200]">
      <NameGroup signals={tb} />
      <div className="relative h-[20px] pt-[3px] pl-[6px]">= dut<Tick /></div>
      <NameGroup signals={dut} />
      <div className="relative h-[20px] pt-[3px] pl-[6px]">= top<Tick /></div>
      <div className="relative h-[21px] pt-[3px] pl-[17px]">= inf(intf)<Tick /></div>
      <NameGroup signals={tb} selected />
      <div className="mr-[5px] h-[3px] bg-[#ffff00]" />
      <div className="relative h-[18px] pl-[18px] leading-[18px]">G4<Tick /></div>
    </div>
  );
}

function ValueGroup({ signals }: { signals: Signal[] }) {
  return (
    <ul className="flex h-[113px] flex-col">
      {signals.map((s) => (
        <li key={s.name} className="flex flex-1 items-center justify-end">{s.value}</li>
      ))}
    </ul>
  );
}

function ValuePane() {
  return (
    <div className="w-[71px] shrink-0 bg-black pt-[37px] pr-[6px] font-['DejaVu_Sans_Mono',monospace] text-[12px] text-[#00b4b4]">
      <ValueGroup signals={tb} />
      <div className="h-[20px]" />
      <ValueGroup signals={dut} />
      <div className="h-[41px]" />
      <ValueGroup signals={tb} />
    </div>
  );
}

type RulerProps = { origin: number; unit: number; marker: number; end: string; endX: number };

function Ruler({ origin, unit, marker, end, endX }: RulerProps) {
  const ticks = Array.from({ length: 50 }, (_, i) => i * 2);
  return (
    <svg width="100%" height="20" className="block bg-[#828282]" role="img" aria-label="Time ruler from 0 to 100">
      <path d="M0 0.500h4000" stroke="#b9b9b9" />
      <path d="M0 19.500h4000" stroke="#4a4a4a" />
      {ticks.map((t) => {
        const x = Math.round(origin + t * unit) + 0.5;
        if (t % 20 === 0) return <path key={t} d={`M${x} 0V19`} stroke={t === 0 ? "#333" : "#f0f000"} />;
        return <path key={t} d={t % 10 === 0 ? `M${x} 10V19` : `M${x} 14V19`} stroke="#f0f000" />;
      })}
      <path d={`M${marker} 0V20`} stroke="#3a34b4" strokeWidth="2" />
      {[0, 20, 40, 60, 80].map((t) => (
        <text key={t} x={Math.round(origin + t * unit) + 1} y="14" fontSize="12" fontFamily="Liberation Sans" fill="#ecec00">
          {t}
        </text>
      ))}
      <text x={endX} y="14" fontSize="12" fontFamily="Liberation Sans" fill="#ecec00">
        {end}
      </text>
    </svg>
  );
}

const UNIT = 9.33;
const X0 = 2;

function Trace({ signal, top, selected }: { signal: Signal; top: number; selected: boolean }) {
  const hi = top + 0.5;
  const lo = top + 17.5;
  const green = selected ? "#1fc41f" : "#00a800";
  const cyan = selected ? "#28c8c8" : "#00b4b4";
  const points = [...signal.edges.map((e) => Math.round(X0 + e * UNIT) + 0.5), 4000];
  let x = X0;
  let level = signal.start;
  let highs = "";
  let lows = "";
  points.forEach((next, i) => {
    const y = level ? hi : lo;
    if (level) highs += `M${x} ${y}H${next}`;
    else lows += `M${x} ${y}H${next}`;
    if (i < points.length - 1) {
      if (level) lows += `M${next} ${hi}V${lo}`;
      else highs += `M${next} ${lo}V${hi}`;
      level = level ? 0 : 1;
    }
    x = next;
  });
  return (
    <g strokeWidth={1.3}>
      {selected && <rect x="0" y={top - 0.5} width="4000" height="18.500" fill="#646464" />}
      <path d={lows} stroke={cyan} />
      <path d={highs} stroke={green} />
    </g>
  );
}

function Traces() {
  const groups: [Signal[], number, boolean][] = [
    [tb, 18, false],
    [dut, 152, false],
    [tb, 305, true],
  ];
  return (
    <svg width="100%" height="459" className="block bg-black" fill="none" role="img" aria-label="Signal waveforms">
      {groups.map(([signals, top, selected]) =>
        signals.map((s, i) => (
          <Trace key={`${top}-${s.name}`} signal={s} top={Math.round(top + i * 22.7)} selected={selected} />
        )),
      )}
      <path d="M2.500 0V459" stroke="#8c8c8c" strokeWidth="1.500" strokeDasharray="9 3 2 6" />
      <path d="M2.500 9V459" stroke="#0a0ac8" strokeWidth="1.500" strokeDasharray="5 21" />
      <path d="M2.500 24V459" stroke="#b4a800" strokeWidth="1.500" strokeDasharray="2 43" />
      <path d="M935.500 0V459" stroke="#a0a0a0" strokeWidth="1.300" strokeDasharray="5 7" />
    </svg>
  );
}

const ArrowBox = ({ d }: { d: string }) => (
  <svg width="13" height="13" viewBox="0 0 13 13" className="shrink-0 bg-[#a8a8a8]" aria-hidden="true">
    <path d={d} fill="#e8e8e8" stroke="#f6f6f6" strokeWidth="0.500" />
  </svg>
);

function VScroll() {
  return (
    <div className="flex w-[22px] shrink-0 justify-center border-r border-[#f4f4f4] bg-[#e4e4e4]">
      <div className="flex w-[14px] flex-col items-center border-x border-[#b0b0b0]">
        <ArrowBox d="M6.500 1L12 12H1z" />
        <div className="h-[18px] w-[13px] border-b-2 border-[#8a8a8a] bg-[#a4a4a4]" />
        <div className="flex-1" />
        <ArrowBox d="M6.500 12L12 1H1z" />
      </div>
    </div>
  );
}

function HScroll({ thumb = "", className }: { thumb?: string; className: string }) {
  return (
    <div className={`flex h-[13px] items-center border-y border-[#b4b4b4] bg-[#e4e4e4] ${className}`}>
      <ArrowBox d="M1 6.500L12 1v11z" />
      {thumb !== "" && <div className={thumb} />}
      <div className="flex-1" />
      <ArrowBox d="M12 6.500L1 1v11z" />
    </div>
  );
}

function GripLine() {
  return (
    <div className="flex w-[6px] shrink-0 flex-col items-center justify-center gap-px bg-[#e4e4e4]">
      {[0, 1, 2, 3, 4, 5, 6, 7, 8, 9].map((i) => (
        <span key={i} className="h-[2px] w-[4px] border-b border-white bg-[#c4c4c4]" />
      ))}
    </div>
  );
}

function WaveViewer() {
  return (
    <main className="shrink-0 bg-[#e4e4e4]">
      <div className="flex h-[501px] border-t border-[#9a9a9a]">
        <NamePane />
        <VScroll />
        <ValuePane />
        <GripLine />
        <div className="min-w-0 flex-1 overflow-hidden pt-px">
          <Ruler origin={2} unit={9.33} marker={944} end="1" endX={935} />
          <Traces />
          <Ruler origin={11} unit={9.15} marker={935} end="100" endX={924} />
        </div>
        <div className="w-[4px] shrink-0 border-l border-[#8d8d8d]" />
      </div>
      <div className="flex h-[17px] items-center">
        <HScroll className="w-[96px]" thumb="h-[11px] w-[19px] bg-[#a4a4a4]" />
        <HScroll className="ml-[20px] w-[72px]" />
        <HScroll className="mr-[4px] ml-[4px] flex-1" />
      </div>
    </main>
  );
}

/* ---------- bottom ---------- */

function StatusBar() {
  return (
    <footer className="flex h-[33px] shrink-0 items-center overflow-hidden border-b-2 border-[#aeb3b8] bg-linear-to-b from-[#e6f3f8] to-[#c5dbf5] pl-[8px] text-[12px] text-[#3a4046]">
      <span className="flex-1">Selected:</span>
      <span className="whitespace-pre">Finished:{"   "}100s</span>
      <span className="mx-[6px] h-[14px] w-[2px] bg-[#edf3f5]" />
      <button type="button" aria-label="Home">
        <Icon size={18}>
          <path d="M4 11l8-6 8 6v11H4z" fill="#f2efe8" />
          <path d="M8 13h8v9H8z" fill="#b8401a" />
          <path d="M1 11L12 3l11 8" stroke="#e0643a" strokeWidth="4" />
          <path d="M17 2h4v6h-4z" fill="#b8401a" />
        </Icon>
      </button>
      <span className="mx-[7px] h-[14px] w-[2px] bg-[#edf3f5]" />
      <button type="button" aria-label="Layout" className="flex items-center gap-1">
        <Icon size={18}>
          <rect x="1.500" y="1.500" width="21" height="20" rx="2" fill="#5a8ad0" stroke="#3560a8" strokeWidth="1.500" />
          <rect x="5" y="5" width="6" height="14" fill="#e9f1fb" />
          <rect x="13" y="5" width="6" height="14" fill="#e9f1fb" />
          <path d="M5 12h14" stroke="#5a8ad0" strokeWidth="2" />
        </Icon>
        <svg width="10" height="7" viewBox="0 0 10 7" aria-hidden="true"><path d="M0 0h10L5 7z" fill="#0a0a0a" /></svg>
      </button>
      <span className="mx-[6px] h-[14px] w-[2px] bg-[#edf3f5]" />
      <button type="button" aria-label="Raise wave">
        <Icon size={18}>
          <path d="M0 12h24v4H0zM0 18h24v5H0z" fill="#4f9bb8" />
          <path d="M9 20V9H4l8-8 8 8h-5v11z" fill="#f6a821" stroke="#b87812" />
        </Icon>
      </button>
      <button type="button" aria-label="Raise source" className="ml-2">
        <Icon size={18}>
          <path d="M0 13h5v10H0zM7 15h10v8H7zM19 13h5v10h-5z" fill="#6a6e72" />
          <path d="M9 20V9H4l8-8 8 8h-5v11z" fill="#f6a821" stroke="#b87812" />
        </Icon>
      </button>
      <span className="mr-[4px] ml-[8px] h-[14px] w-[2px] bg-[#edf3f5]" />
      <button type="button" aria-label="Full screen" className="w-[8px] overflow-hidden">
        <Icon size={20}>
          <path d="M1 1h8L6.500 4l3 3L7 9.500 4 6.500 1 9zM1 23v-8l3 2.500 3-3L9.500 17l-3 3L9 23z" fill="#2f3538" />
        </Icon>
      </button>
    </footer>
  );
}

const VimIcon = () => (
  <svg width="28" height="28" viewBox="0 0 28 28" className="shrink-0" aria-hidden="true">
    <path d="M14 0l14 14-14 14L0 14z" fill="#0b8a10" stroke="#0a3b0c" />
    <path d="M15 28L28 14l-3-3-12 13z" fill="#1b2a5c" />
    <path
      d="M2 3l1-1h9l1 1v2l-2 1v8l8-8-1-1V3l1-1h7l1 1v2L11 27H7l-1-1V6H4L2 5z"
      fill="#c9cbcb"
      stroke="#4c4f4f"
      strokeWidth="1.200"
    />
    <path d="M17 17l-1 9M20 18v7M24 18v7M20 19q2-2 4 0" stroke="#c9cbcb" strokeWidth="2" fill="none" />
  </svg>
);

function Task({ label, active = false, children }: Kids & { label: string; active?: boolean }) {
  return (
    <button
      type="button"
      aria-label={label}
      className={
        active
          ? "flex h-[44px] flex-1 items-start gap-[5px] overflow-hidden rounded-sm border-2 border-[#bcc0be] bg-[#cbcfcd] pt-[3px] pl-[5px]"
          : "flex h-[44px] flex-1 items-start gap-[5px] overflow-hidden rounded-sm border-2 border-[#d5d8d6] bg-[#eef2ef] pt-[3px] pl-[5px]"
      }
    >
      {children}
      <span className="mt-[5px] font-['Noto_Sans',sans-serif] text-[13px] leading-[16px] text-[#3c4442]">...</span>
    </button>
  );
}

function Taskbar() {
  const editors = Array.from({ length: 11 }, (_, i) => `Editor ${i + 1}`);
  return (
    <div className="flex shrink-0 items-start bg-linear-to-b from-[#f0f1ef] to-[#e2e6e3] pt-[3px] pl-[5px]">
      <button
        type="button"
        aria-label="Show desktop"
        className="mt-[2px] flex h-[44px] w-[34px] shrink-0 items-start justify-center rounded-sm border-2 border-[#d5d8d6] bg-[#eef2ef] pt-[7px]"
      >
        <svg width="17" height="18" viewBox="0 0 17 18" fill="none" aria-hidden="true">
          <path d="M8.500 1.500h6v5h-6z" stroke="#2c3432" strokeWidth="2.500" />
          <path d="M5.500 7H2v4M2 16h4" stroke="#2c3432" strokeWidth="2.500" />
        </svg>
      </button>
      <div className="ml-[6px] flex w-[829px] shrink-0 gap-[6px]">
        <Task label="Terminal">
          <svg width="27" height="27" viewBox="0 0 26 27" className="shrink-0" aria-hidden="true">
            <rect x="0.500" y="0.500" width="25" height="26" rx="2" fill="#2f3735" stroke="#b4b4aa" />
            <path d="M1 1h24v3H1z" fill="#c6c6bc" />
            <path d="M5 7l4 3-4 3M10 14h4" stroke="#e6ece9" strokeWidth="1.400" fill="none" />
          </svg>
        </Task>
        {editors.map((name) => (
          <Task key={name} label={name}>
            <VimIcon />
          </Task>
        ))}
        <Task label="Verdi" active>
          <svg width="28" height="28" viewBox="0 0 27 27" className="shrink-0" aria-hidden="true">
            <defs>
              <linearGradient id="verdi" x1="0" y1="0" x2="1" y2="1">
                <stop offset="0" stopColor="#b04af8" />
                <stop offset="0.6" stopColor="#5a1aa8" />
                <stop offset="1" stopColor="#1a0a40" />
              </linearGradient>
            </defs>
            <rect width="27" height="27" fill="url(#verdi)" />
            <text x="13.500" y="21" textAnchor="middle" fontSize="24" fontWeight="700" fontFamily="Liberation Serif" fill="#fff">
              S
            </text>
          </svg>
        </Task>
      </div>
      <div className="ml-[14px] flex min-w-0 flex-1 gap-[4px]">
        <button type="button" aria-label="Workspace 1" className="mt-[3px] h-[40px] flex-1 border-2 border-[#8f9391] bg-[#f6faf6]" />
        {[2, 3, 4].map((n) => (
          <button
            key={n}
            type="button"
            aria-label={`Workspace ${n}`}
            className="mt-[2px] h-[40px] flex-1 rounded-sm border border-[#cfd4d1] bg-[#dce1dd]"
          />
        ))}
      </div>
    </div>
  );
}

export default function App() {
  return (
    <div className={`flex h-screen flex-col overflow-hidden bg-[#e2e6e3] ${UI}`}>
      <div className="h-[6px] shrink-0 bg-[#f5dfd9]" />
      <div className="flex min-h-0 flex-1 flex-col overflow-hidden border-l-[4px] border-black">
        <DesktopBar />
        <WindowTitle />
        <MainMenu />
        <ToolbarOne />
        <ToolbarTwo />
        <ToolbarThree />
        <WaveTitle />
        <nav className="flex h-[26px] shrink-0 items-center gap-[15px] bg-linear-to-b from-[#e6f0fc] to-[#b9cce0] pb-px pl-[8px] text-[12px] text-[#22282e]">
          <Menu
            items={[
              ["", "F", "ile"],
              ["", "S", "ignal"],
              ["", "V", "iew"],
              ["", "W", "aveform"],
              ["", "A", "nalog"],
              ["", "T", "ools"],
              ["W", "i", "ndow"],
            ]}
          />
        </nav>
        <WaveToolbar />
        <WaveViewer />
        <StatusBar />
        <Taskbar />
      </div>
    </div>
  );
}
